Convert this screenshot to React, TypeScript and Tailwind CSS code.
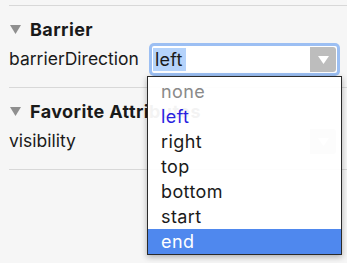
import React from "react";

const OPTIONS = ["none", "left", "right", "top", "bottom", "start", "end"];

function Caret() {
  return (
    <svg width="11" height="9" viewBox="0 0 11 9" className="shrink-0">
      <path d="M0 0 H11 L5.5 9 Z" fill="#8f8f8f" />
    </svg>
  );
}

function Heading({ title }: { title: string }) {
  return (
    <div className="ml-[10px] flex h-6 items-center gap-[9px]">
      <Caret />
      <span className="whitespace-nowrap text-[18px] font-bold tracking-[0.4px] text-[#1a1a1a]">
        {title}
      </span>
    </div>
  );
}

function Separator() {
  return <div className="ml-[9px] h-px bg-[#d8d8d8]" />;
}

function ArrowButton({ faint }: { faint?: boolean }) {
  return (
    <div
      className={`flex h-[25px] w-[26px] items-center justify-center rounded-r-[3px] ${
        faint ? "bg-[#c4c4c4]" : "bg-[#bdbdbd]"
      }`}
    >
      <svg width="11" height="8" viewBox="0 0 11 8">
        <path d="M0 0 H11 L5.5 8 Z" fill="#ffffff" />
      </svg>
    </div>
  );
}

export default function App() {
  return (
    <div
      className="relative h-[263px] w-[347px] overflow-hidden bg-[#f6f6f6] pt-[5px] text-[#1a1a1a]"
      style={{ fontFamily: "Inter, 'Liberation Sans', sans-serif" }}
    >
      <Separator />
      <div className="mt-[11px]">
        <Heading title="Barrier" />
      </div>
      <div className="mt-[2px] flex h-[33px] items-center">
        <span className="ml-[9px] w-[140px] text-[17.5px]">barrierDirection</span>
        <div className="flex h-[33px] w-[191px] items-center rounded-[5px] bg-[#9cbff3] p-[3px]">
          <div className="flex h-full flex-1 items-center rounded-[2px] bg-white pl-[1px] pr-[1px]">
            <span className="flex h-[23px] items-center bg-[#b5d3fb] pl-[2px] pr-[3px] text-[18px] leading-none tracking-[0.2px]">
              left
            </span>
            <div className="flex-1" />
            <ArrowButton />
          </div>
        </div>
      </div>
      <div className="mt-[11px]">
        <Separator />
      </div>
      <div className="mt-[11px]">
        <Heading title="Favorite Attributes" />
      </div>
      <div className="mt-[2px] flex h-[33px] items-center">
        <span className="ml-[9px] w-[140px] text-[17.5px]">visibility</span>
        <div className="flex h-[33px] w-[191px] items-center p-[3px]">
          <div className="flex h-full flex-1 items-center rounded-[2px] bg-white pr-[1px]">
            <div className="flex-1" />
            <ArrowButton faint />
          </div>
        </div>
      </div>
      <div className="mt-[11px]">
        <Separator />
      </div>

      <div className="absolute left-[147px] top-[76px] w-[195px] border border-[#2a2a2a] bg-white/95 pt-[2px] shadow-[0_2px_6px_rgba(0,0,0,0.3)]">
        {OPTIONS.map((opt) => (
          <div
            key={opt}
            className={`flex h-[25px] items-center pl-[13px] text-[18px] tracking-[0.4px] ${
              opt === "end"
                ? "bg-[#4f88ee] text-white"
                : opt === "none"
                ? "text-[#8a8a8a]"
                : opt === "left"
                ? "text-[#2a1fe0]"
                : "text-[#1a1a1a]"
            }`}
          >
            {opt}
          </div>
        ))}
      </div>
    </div>
  );
}
